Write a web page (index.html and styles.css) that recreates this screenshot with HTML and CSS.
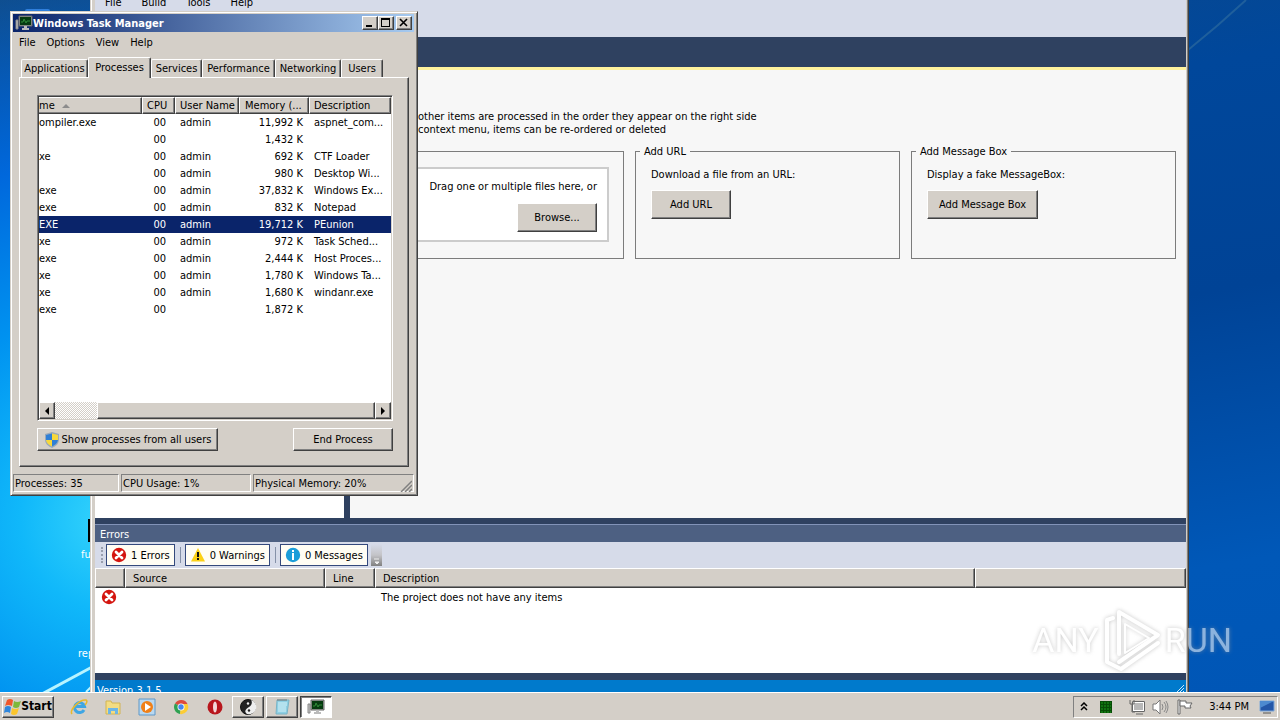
FILE: index.html
```html
<!DOCTYPE html>
<html lang="en">
<head>
  <meta charset="UTF-8">
  <meta name="viewport" content="width=device-width, initial-scale=1.0">
  <title>Desktop</title>
  <link rel="stylesheet" href="styles.css">
</head>
<body>
  <!-- shared icons -->
  <svg class="defs" width="0" height="0">
    <symbol id="error" viewBox="0 0 16 16">
      <circle cx="8" cy="8" r="7.2" fill="#d4150f"/>
      <path d="M5 5l6 6M11 5l-6 6" stroke="#fff" stroke-width="2.8" stroke-linecap="round"/>
    </symbol>
    <symbol id="monitor" viewBox="0 0 18 16">
      <path d="M1 5h2v9H1z" fill="#c8c8c8" stroke="#888"/>
      <path d="M4 1h13v10H4z" fill="#9aa09a" stroke="#666"/>
      <path d="M5 2h11v8H5z" fill="#063a10"/>
      <path d="M6 7h2l1-3 2 4 1-2h3" fill="none" stroke="#2f8a38"/>
      <path d="M9 11h3v2h2v2H7v-2h2z" fill="#bbb"/>
    </symbol>
  </svg>

  <main class="desktop">
    <svg class="streak left" width="90" height="26" viewBox="0 0 90 26"><path d="M42 28L92 1" stroke="#b8f4ff" stroke-width="3"/><path d="M86 26l6-6" stroke="#b8f4ff" stroke-width="2"/></svg>
    <svg class="streak right" width="60" height="54" viewBox="0 0 60 54"><path d="M0 50Q30 26 58 0" fill="none" stroke="#1f5f9c" stroke-width="2"/></svg>
    <div class="shortcut top"></div>
    <div class="shortcut black"></div>
    <span class="shortcut fu">fu</span>
    <span class="shortcut rep">rep</span>

    <!-- builder -->
    <section class="window builder">
      <nav class="menu">
        <a href="#">File</a>
        <a href="#">Build</a>
        <a href="#">Tools</a>
        <a href="#">Help</a>
      </nav>
      <div class="doc-tabs"></div>
      <div class="work">
        <div class="tree"></div>
        <div class="doc">
          <p class="intro">other items are processed in the order they appear on the right side<br>context menu, items can be re-ordered or deleted</p>
          <div class="groups">
            <fieldset class="group">
              <div class="drop">
                <span>Drag one or multiple files here, or</span>
                <button class="btn">Browse...</button>
              </div>
            </fieldset>
            <fieldset class="group">
              <legend>Add URL</legend>
              <p>Download a file from an URL:</p>
              <button class="btn">Add URL</button>
            </fieldset>
            <fieldset class="group">
              <legend>Add Message Box</legend>
              <p>Display a fake MessageBox:</p>
              <button class="btn wide">Add Message Box</button>
            </fieldset>
          </div>
        </div>
      </div>
      <div class="errors">
        <h2>Errors</h2>
        <div class="toolbar">
          <i class="grip"></i>
          <button><svg width="16" height="16"><use href="#error"/></svg>1 Errors</button>
          <i class="sep"></i>
          <button><svg width="16" height="16" viewBox="0 0 16 16"><path d="M8 1l7 13.500H1z" fill="#fcd116"/><path d="M7 5h2v5H7zM7 11h2v2H7z" fill="#111"/></svg>0 Warnings</button>
          <i class="sep"></i>
          <button><svg width="16" height="16" viewBox="0 0 16 16"><circle cx="8" cy="8" r="7.200" fill="#1b9dd9"/><path d="M7 3h2v2H7zM7 6h2v7H7z" fill="#fff"/></svg>0 Messages</button>
          <i class="overflow"><svg width="10" height="10" viewBox="0 0 10 10"><path d="M3 3h5M4 6h4l-2 2z" stroke="#eee" fill="#eee"/></svg></i>
        </div>
        <table class="error-list">
          <colgroup><col class="c-icon"><col class="c-source"><col class="c-line"><col class="c-desc"><col></colgroup>
          <thead>
            <tr><th></th><th>Source</th><th>Line</th><th>Description</th><th></th></tr>
          </thead>
          <tbody>
            <tr><td><svg width="16" height="16"><use href="#error"/></svg></td><td></td><td></td><td>The project does not have any items</td><td></td></tr>
          </tbody>
        </table>
      </div>
      <footer class="version">Version 3.1.5
        <svg width="10" height="10" viewBox="0 0 10 10"><path d="M1 10l9-9M4 10l6-6M7 10l3-3" stroke="#cfe8f8"/></svg>
      </footer>
    </section>

    <!-- task manager -->
    <section class="window taskmgr">
      <header class="title">
        <svg width="18" height="16"><use href="#monitor"/></svg>
        <h1>Windows Task Manager</h1>
        <button aria-label="Minimize"><svg width="12" height="10"><path d="M2 7h6v2H2z"/></svg></button>
        <button aria-label="Maximize"><svg width="12" height="10"><path d="M1 0h9v9H1zM2 2v6h7V2z" fill-rule="evenodd"/></svg></button>
        <button class="close" aria-label="Close"><svg width="12" height="10"><path d="M2 1l7 7M9 1L2 8" stroke="#000" stroke-width="1.600"/></svg></button>
      </header>
      <nav class="menu">
        <a href="#">File</a>
        <a href="#">Options</a>
        <a href="#">View</a>
        <a href="#">Help</a>
      </nav>
      <div class="tabs">
        <button class="t1">Applications</button>
        <button class="t2 active">Processes</button>
        <button class="t3">Services</button>
        <button class="t4">Performance</button>
        <button class="t5">Networking</button>
        <button class="t6">Users</button>
      </div>
      <div class="panel">
        <div class="list">
          <table>
            <colgroup><col class="c-name"><col class="c-cpu"><col class="c-user"><col class="c-mem"><col></colgroup>
            <thead>
              <tr><th>me<i class="sort"></i></th><th>CPU</th><th>User Name</th><th>Memory (...</th><th>Description</th></tr>
            </thead>
            <tbody>
              <tr><td>ompiler.exe</td><td>00</td><td>admin</td><td>11,992 K</td><td>aspnet_com...</td></tr>
              <tr><td></td><td>00</td><td></td><td>1,432 K</td><td></td></tr>
              <tr><td>xe</td><td>00</td><td>admin</td><td>692 K</td><td>CTF Loader</td></tr>
              <tr><td></td><td>00</td><td>admin</td><td>980 K</td><td>Desktop Wi...</td></tr>
              <tr><td>exe</td><td>00</td><td>admin</td><td>37,832 K</td><td>Windows Ex...</td></tr>
              <tr><td>exe</td><td>00</td><td>admin</td><td>832 K</td><td>Notepad</td></tr>
              <tr class="selected"><td>EXE</td><td>00</td><td>admin</td><td>19,712 K</td><td>PEunion</td></tr>
              <tr><td>xe</td><td>00</td><td>admin</td><td>972 K</td><td>Task Sched...</td></tr>
              <tr><td>exe</td><td>00</td><td>admin</td><td>2,444 K</td><td>Host Proces...</td></tr>
              <tr><td>xe</td><td>00</td><td>admin</td><td>1,780 K</td><td>Windows Ta...</td></tr>
              <tr><td>xe</td><td>00</td><td>admin</td><td>1,680 K</td><td>windanr.exe</td></tr>
              <tr><td>exe</td><td>00</td><td></td><td>1,872 K</td><td></td></tr>
            </tbody>
          </table>
          <div class="scrollbar">
            <button aria-label="Scroll left"><svg width="12" height="12"><path d="M8 2v8L4 6z"/></svg></button>
            <div class="track"><div class="thumb"></div></div>
            <button aria-label="Scroll right"><svg width="12" height="12"><path d="M4 2v8l4-4z"/></svg></button>
          </div>
        </div>
        <div class="actions">
          <button class="btn all"><svg width="16" height="16" viewBox="0 0 16 16"><path d="M8 0l7 2v5c0 5-3 7-7 9-4-2-7-4-7-9V2z" fill="#9aa9b8"/><path d="M8 1.500V8H2V3z" fill="#2f7fd6"/><path d="M8 1.500V8h6V3z" fill="#f7d83b"/><path d="M2 8h6v6.500C5 13 2.500 11.500 2 8z" fill="#f7d83b"/><path d="M14 8H8v6.500c3-1.500 5.500-3 6-6.500z" fill="#2f7fd6"/></svg>Show processes from all users</button>
          <button class="btn end">End Process</button>
        </div>
      </div>
      <footer class="status">
        <span class="s1">Processes: 35</span>
        <span class="s2">CPU Usage: 1%</span>
        <span class="s3">Physical Memory: 20%<svg width="12" height="12" viewBox="0 0 12 12"><path d="M1 12L12 1M5 12l7-7M9 12l3-3" stroke="#808080" stroke-width="1.500"/></svg></span>
      </footer>
    </section>

    <div class="watermark">
      <span>ANY</span>
      <svg width="58" height="64" viewBox="0 0 58 64"><g fill="none" stroke="#fff" stroke-width="4" stroke-linejoin="round" stroke-linecap="round"><path d="M16 46V4L55 27 16 54"/><path d="M10 10L4 12v42l14 7 37-26"/><path d="M22 16l24 14-24 15z" stroke-width="2"/></g></svg>
      <span>RUN</span>
    </div>
  </main>

  <footer class="taskbar">
    <button class="start"><svg width="17" height="16" viewBox="0 0 17 16"><path d="M3 1q3-2 6 0L8 7Q4 5 1 7z" fill="#f0562a"/><path d="M10 2q3 2 7 0l-2 6q-3 2-6 0z" fill="#7db83a"/><path d="M1 8q3-2 6 0l-1 6q-3-2-6 0z" fill="#2f86dc"/><path d="M8 9q3 2 7 0l-2 6q-3 2-6 0z" fill="#fbc52c"/></svg>Start</button>
    <a href="#" aria-label="Internet Explorer"><svg width="18" height="18" viewBox="0 0 18 18"><path d="M14 12a5 5 0 1 1 .5-3.500H5" fill="none" stroke="#3ea6e4" stroke-width="3"/><path d="M2 16C-1 12 10 1 16 2c2 1 0 4-1 5" fill="none" stroke="#e8b92c" stroke-width="1.500"/></svg></a>
    <a href="#" aria-label="Explorer"><svg width="18" height="18" viewBox="0 0 18 18"><path d="M2 3h5l1 2h8v11H2z" fill="#f3dc82" stroke="#d2b452"/><path d="M4 10h10v6h-3v-3H7v3H4z" fill="#6db6e6"/></svg></a>
    <a href="#" aria-label="Media Player"><svg width="18" height="18" viewBox="0 0 18 18"><path d="M1 1h16v16H1z" fill="#b9d8f0" stroke="#5e98c8"/><circle cx="9" cy="9" r="6" fill="#f08018"/><path d="M7 5l6 4-6 4z" fill="#fff"/></svg></a>
    <a href="#" aria-label="Chrome"><svg width="18" height="18" viewBox="0 0 18 18"><path d="M9 9L3 5.500A7 7 0 0 1 15.500 6z" fill="#dd4b3e"/><path d="M9 9L3 5.500A7 7 0 0 0 8 16z" fill="#2fa152"/><path d="M9 9l-1 7a7 7 0 0 0 7.500-10H9z" fill="#fccd35"/><circle cx="9" cy="9" r="3.500" fill="#fff"/><circle cx="9" cy="9" r="2.700" fill="#4687f0"/></svg></a>
    <a href="#" aria-label="Opera"><svg width="18" height="18" viewBox="0 0 18 18"><circle cx="9" cy="9" r="7.500" fill="#b8161c"/><ellipse cx="9" cy="9" rx="2" ry="5.500" fill="#f3d8d8"/></svg></a>
    <button class="task" aria-label="PEunion"><svg width="18" height="18" viewBox="0 0 18 18"><circle cx="9" cy="9" r="7.500" fill="#222" stroke="#111"/><path d="M12 2A7 7 0 0 1 8 16c-4-3 0-6 2-7s4-4 2-7z" fill="#eee"/><circle cx="9" cy="5.500" r="1.200" fill="#eee"/><circle cx="10" cy="12.500" r="1.200" fill="#222"/></svg></button>
    <button class="task" aria-label="Notepad"><svg width="18" height="18" viewBox="0 0 18 18"><path d="M4 2h12l-2 14H3z" fill="#8ed0e4" stroke="#7ab4c6"/><path d="M5 5h9M5 7h9M5 9h8M5 11h8M5 13h8" stroke="#d8f2f8"/><path d="M5 1v2M7 1v2M9 1v2M11 1v2M13 1v2" stroke="#777"/></svg></button>
    <button class="task pressed" aria-label="Windows Task Manager"><svg width="18" height="16"><use href="#monitor"/></svg></button>
    <div class="tray">
      <svg width="8" height="10" viewBox="0 0 8 10"><path d="M1 4l3-3 3 3M1 8l3-3 3 3" fill="none" stroke="#000" stroke-width="1.500"/></svg>
      <svg class="cpu" width="12" height="12" viewBox="0 0 12 12"><path d="M0 0h12v12H0z" fill="#064c06"/><path d="M1 2h10M1 5h10M1 8h10M1 11h10" stroke="#1a9a1a" stroke-dasharray="2 1"/></svg>
      <svg class="net" width="18" height="16" viewBox="0 0 18 16"><path d="M5 3h11v9H5z" fill="#b8b8b8" stroke="#fff" stroke-width="2"/><path d="M4.500 2.500h12v10h-12zM8 15h7M2 1v4h4V1M4 5v8h3" fill="none" stroke="#666"/></svg>
      <svg width="17" height="16" viewBox="0 0 17 16"><path d="M1 5h3l4-4v14l-4-4H1z" fill="#fff" stroke="#777"/><path d="M10 5q2 3 0 6M12 3q4 5 0 10M14 2q4 6 0 12" fill="none" stroke="#888"/></svg>
      <svg class="flag" width="16" height="16" viewBox="0 0 16 16"><path d="M1 1h2v14H1z" fill="#fff" stroke="#666"/><path d="M3 2h6v2h6l-2 3 1 2H8V7H3z" fill="#fff" stroke="#666"/></svg>
      <time>3:44 PM</time>
      <svg width="16" height="14" viewBox="0 0 16 14"><path d="M1 1h14v10H1z" fill="#2457a8" stroke="#7fa8d8"/><path d="M1 1h14L1 8z" fill="#4d8ad0"/><path d="M4 13h8" stroke="#555"/></svg>
    </div>
  </footer>
</body>
</html>
```

FILE: styles.css
```css
* {
  box-sizing: border-box;
}

body {
  margin: 0;
  height: 100vh;
  display: flex;
  flex-direction: column;
  overflow: hidden;
  font: 11px/13px "DejaVu Sans Condensed", Tahoma, sans-serif;
  color: #000;
}

.defs {
  position: absolute;
}

a {
  color: inherit;
  text-decoration: none;
}

button {
  font: inherit;
  color: inherit;
  padding: 0;
  background: #d4cfc8;
  border: 1px solid;
  border-color: #fff #404040 #404040 #fff;
  box-shadow: inset -1px -1px #808080;
  display: flex;
  align-items: center;
  justify-content: center;
  white-space: nowrap;
}

svg {
  flex: none;
  display: block;
}

h1, h2, p {
  margin: 0;
  font-size: inherit;
  font-weight: normal;
}

table {
  width: 100%;
  table-layout: fixed;
  border-collapse: separate;
  border-spacing: 0;
}

th, td {
  padding: 0;
  font-weight: normal;
  text-align: left;
  white-space: nowrap;
}

/* desktop */
.desktop {
  flex: 1;
  min-height: 0;
  position: relative;
  overflow: hidden;
  background:
    radial-gradient(circle at 110px 520px, #35d4fc 0, #10b8fa 90px, #0092f0 210px, #0068dc 360px, transparent 560px) left / 100px 100% no-repeat,
    linear-gradient(170deg, #114a84, #00479b 30%, #004396 55%, #0058b8 85%, #0056b6);
  background-color: #0040ac;
}

.streak {
  position: absolute;
}

.streak.left {
  left: 0;
  bottom: 0;
}

.streak.right {
  right: 32px;
  top: 0;
}

.shortcut {
  position: absolute;
  color: #fff;
}

.shortcut.top {
  left: 25px;
  top: 9px;
  width: 25px;
  height: 4px;
  background: #2f7fdc;
  border-radius: 8px;
}

.shortcut.black {
  left: 88px;
  top: 519px;
  width: 4px;
  height: 23px;
  background: #000;
}

.shortcut.fu {
  left: 81px;
  top: 548px;
}

.shortcut.rep {
  left: 78px;
  top: 647px;
}

.window {
  position: absolute;
  display: flex;
  flex-direction: column;
  background: #d4cfc8;
}

.menu {
  display: flex;
}

.btn {
  height: 29px;
  width: 80px;
}

/* builder */
.builder {
  left: 90px;
  right: 91px;
  top: -6px;
  bottom: 0;
  border-left: 1px solid #d4cfc8;
  border-right: 1px solid #404040;
  box-shadow: inset 1px 0 #fff, inset -1px 0 #808080;
  padding: 0 2px 0 4px;
}

.builder .menu {
  height: 43px;
  background: #d6dbe9;
  gap: 20px;
  padding: 2px 10px;
}

.doc-tabs {
  height: 33px;
  background: #2f4160;
  border-bottom: 3px solid #fff29d;
}

.work {
  flex: 1;
  display: flex;
  gap: 6px;
  background: #2f4160;
  padding-bottom: 6px;
}

.tree {
  width: 249px;
  background: #fff;
}

.doc {
  flex: 1;
  background: #f7f7f7;
  padding: 40px 10px 0 9px;
}

.intro {
  padding-left: 59px;
}

.groups {
  display: grid;
  grid-template-columns: repeat(3, 1fr);
  gap: 11px;
  margin-top: 9px;
}

.group {
  position: relative;
  min-width: 0;
  height: 114px;
  margin: 0;
  padding: 10px 15px 0;
  border: 1px solid #7c7c7c;
}

.group:not(:has(legend)) {
  height: 108px;
  margin-top: 6px;
  padding: 15px 14px 0;
}

.group legend {
  padding: 0 4px;
  margin-left: -11px;
}

.group p {
  margin-bottom: 9px;
}

.group .wide {
  width: 111px;
}

.drop {
  height: 75px;
  background: #fff;
  border: 2px solid #ccc;
  padding: 11px 10px 0;
  display: flex;
  flex-direction: column;
  align-items: flex-end;
  gap: 10px;
}

.errors {
  background: #fff;
  height: 149px;
}

.errors h2 {
  height: 18px;
  padding: 3px 5px 0;
  color: #fff;
  background: #4d6082;
  border-top: 1px solid #8293b8;
}

.toolbar {
  display: flex;
  align-items: center;
  height: 26px;
  padding-left: 6px;
  background: #d6dbe9;
}

.toolbar button {
  height: 22px;
  padding: 0 4px;
  gap: 4px;
  background: #fffdf4;
  border: 1px solid #34497c;
  box-shadow: none;
}

.grip {
  width: 5px;
  height: 16px;
  border-left: 2px dotted #999fae;
}

.sep {
  width: 1px;
  height: 16px;
  margin: 0 4px 0 5px;
  background: #8591a8;
}

.overflow {
  width: 11px;
  height: 22px;
  margin-left: 3px;
  padding-top: 12px;
  background: linear-gradient(#d6dbe9, #c4c4c8 50%, #808080);
}

.error-list .c-icon { width: 30px; }
.error-list .c-source { width: 200px; }
.error-list .c-line { width: 50px; }
.error-list .c-desc { width: 600px; }

.error-list th {
  height: 20px;
  padding-left: 7px;
  background: #d4cfc8;
  border: 1px solid;
  border-color: #fff #404040 #404040 #fff;
  box-shadow: inset -1px -1px #808080;
}

.error-list td {
  height: 18px;
  padding-left: 6px;
}

.version {
  display: flex;
  justify-content: space-between;
  height: 19px;
  padding: 4px 2px 0;
  color: #fff;
  background: #007acc;
  border-top: 7px solid #2f4160;
}

/* task manager */
.taskmgr {
  left: 10px;
  top: 11px;
  width: 408px;
  border: 1px solid;
  border-color: #d4cfc8 #404040 #404040 #d4cfc8;
  box-shadow: inset 1px 1px #fff, inset -1px -1px #808080;
  padding: 2px 3px 3px 2px;
}

.title {
  display: flex;
  align-items: center;
  height: 18px;
  padding: 0 2px;
  color: #fff;
  background: linear-gradient(90deg, #0a246a, #a6caf0);
}

.title h1 {
  flex: 1;
  font-weight: bold;
}

.title button {
  width: 16px;
  height: 14px;
}

.title .close {
  margin-left: 2px;
}

.taskmgr .menu {
  gap: 11px;
  padding: 4px 6px;
}

.tabs {
  display: flex;
  align-items: flex-end;
  height: 24px;
  padding-left: 8px;
}

.tabs button {
  height: 18px;
  border-bottom: 0;
  box-shadow: inset -1px 0 #808080;
  border-radius: 2px 2px 0 0;
}

.tabs .active {
  position: relative;
  z-index: 1;
  height: 21px;
  margin-bottom: -1px;
  padding-bottom: 2px;
}

.tabs .t1 { width: 67px; }
.tabs .t2 { width: 63px; }
.tabs .t3 { width: 51px; }
.tabs .t4 { width: 73px; }
.tabs .t5 { width: 66px; }
.tabs .t6 { width: 42px; }

.panel {
  height: 390px;
  margin: 0 5px 0 6px;
  padding: 17px 15px 0 17px;
  border: 1px solid;
  border-color: #fff #404040 #404040 #fff;
  box-shadow: inset -1px -1px #808080;
}

.list {
  height: 326px;
  display: flex;
  flex-direction: column;
  justify-content: space-between;
  background: #fff;
  border: 1px solid;
  border-color: #808080 #fff #fff #808080;
  box-shadow: inset 1px 1px #404040, inset -1px -1px #d4cfc8;
  padding: 1px;
}

.list .c-name { width: 103px; }
.list .c-cpu { width: 33px; }
.list .c-user { width: 64px; }
.list .c-mem { width: 70px; }

.list th {
  height: 17px;
  padding-left: 4px;
  background: #d4cfc8;
  border: 1px solid;
  border-color: #fff #404040 #404040 #fff;
  box-shadow: inset -1px -1px #808080;
}

.list th:nth-child(4) {
  padding-left: 5px;
}

.list td {
  height: 17px;
  padding-left: 5px;
}

.list th:first-child, .list td:first-child {
  padding-left: 0;
  border-left: 0;
}

.list td:nth-child(2), .list td:nth-child(4) {
  text-align: right;
  padding-right: 6px;
}

.list td:nth-child(2) {
  padding-right: 9px;
}

.selected td {
  color: #fff;
  background: #0a246a;
}

.sort {
  display: inline-block;
  margin-left: 7px;
  border: 4px solid transparent;
  border-top: 0;
  border-bottom-color: #8c8c8c;
  vertical-align: middle;
}

.scrollbar {
  display: flex;
  height: 17px;
}

.scrollbar button {
  width: 16px;
}

.track {
  flex: 1;
  padding-left: 42px;
  background: repeating-conic-gradient(#fff 0 25%, #d4cfc8 0 50%) 0 0 / 2px 2px;
}

.thumb {
  height: 17px;
  background: #d4cfc8;
  border: 1px solid;
  border-color: #fff #404040 #404040 #fff;
  box-shadow: inset -1px -1px #808080;
}

.actions {
  display: flex;
  justify-content: space-between;
  margin-top: 7px;
}

.actions .btn {
  height: 23px;
}

.actions .all {
  width: 181px;
  gap: 2px;
}

.actions .end {
  width: 100px;
}

.status {
  display: flex;
  gap: 2px;
  margin-top: 7px;
}

.status span {
  height: 18px;
  padding: 2px 1px 0;
  border: 1px solid;
  border-color: #808080 #fff #fff #808080;
}

.status .s1 { width: 106px; }
.status .s2 { width: 130px; }

.status .s3 {
  flex: 1;
  display: flex;
  justify-content: space-between;
}

.status svg {
  margin-top: 3px;
}

/* watermark */
.watermark {
  position: absolute;
  right: 48px;
  bottom: 20px;
  display: flex;
  align-items: center;
  gap: 4px;
  font: 34px/64px Roboto, sans-serif;
  color: #fff;
  opacity: 0.55;
  filter: drop-shadow(0 0 2px #999);
}

/* taskbar */
.taskbar {
  display: flex;
  align-items: center;
  height: 28px;
  padding: 0 2px;
  background: #d4cfc8;
  border-top: 1px solid #fff;
}

.start {
  width: 52px;
  height: 22px;
  margin-right: 8px;
  font-size: 12px;
  font-weight: bold;
}

.taskbar a {
  width: 34px;
  display: flex;
  justify-content: center;
}

.task {
  width: 32px;
  height: 22px;
  margin-right: 2px;
}

.pressed {
  background: #fff;
  border-color: #404040 #fff #fff #404040;
  box-shadow: inset 1px 1px #808080;
}

.tray {
  display: flex;
  align-items: center;
  height: 22px;
  margin-left: auto;
  padding: 0 2px 0 6px;
  border: 1px solid;
  border-color: #808080 #fff #fff #808080;
}

.tray .cpu { margin: 0 16px 0 12px; }
.tray .net { margin-right: 6px; }
.tray .flag { margin: 0 16px 0 8px; }

.tray time {
  margin-right: 10px;
}
```
